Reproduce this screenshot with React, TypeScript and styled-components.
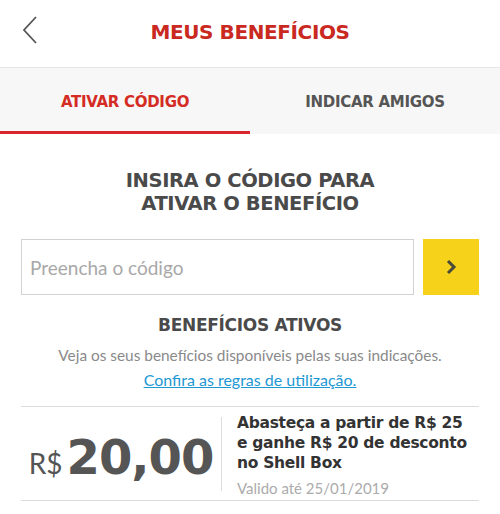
import React from 'react'
import styled, { createGlobalStyle } from 'styled-components'

const GlobalStyle = createGlobalStyle`
   html, body {
      margin: 0;
      padding: 0;
      background: #fff;
   }
   body {
      font-family: 'Lato', 'Liberation Sans', sans-serif;
   }
`

const HEAVY = `'DejaVu Sans', 'Liberation Sans', sans-serif`

const Header = styled.header`
   height: 68px;
   display: flex;
   align-items: center;
   justify-content: center;
   position: relative;
   border-bottom: 1px solid #e6e6e6;
   box-sizing: border-box;
   padding-bottom: 4px;
`

const BackButton = styled.button`
   position: absolute;
   left: 18px;
   top: 14px;
   width: 24px;
   height: 32px;
   padding: 0;
   border: 0;
   background: none;
   display: flex;
   align-items: center;
   justify-content: center;
`

const Title = styled.h1`
   margin: 0;
   font-family: ${HEAVY};
   font-weight: 700;
   font-size: 20px;
   letter-spacing: -0.4px;
   color: #c9291f;
`

const Tabs = styled.nav`
   display: flex;
   background: #f7f7f7;
   height: 66px;
`

const Tab = styled.div<{ $active?: boolean }>`
   flex: 1;
   display: flex;
   align-items: center;
   justify-content: center;
   font-family: ${HEAVY};
   font-weight: 700;
   font-size: 15px;
   letter-spacing: -0.3px;
   color: ${p => (p.$active ? '#d42c24' : '#555')};
   border-bottom: 3px solid ${p => (p.$active ? '#d7272c' : 'transparent')};
   padding-top: 4px;
`

const Content = styled.main`
   padding: 0 21px 0 21px;
   display: flex;
   flex-direction: column;
   align-items: center;
`

const Heading = styled.h2`
   margin: 35px 0 0;
   text-align: center;
   font-family: ${HEAVY};
   font-weight: 700;
   font-size: 19.5px;
   line-height: 23px;
   letter-spacing: -0.4px;
   color: #4a4a4a;
`

const CodeRow = styled.div`
   align-self: stretch;
   display: flex;
   gap: 9px;
   margin-top: 24px;
`

const CodeInput = styled.input`
   flex: 1;
   min-width: 0;
   height: 56px;
   box-sizing: border-box;
   border: 1px solid #d2d2d2;
   padding: 0 8px;
   font-family: 'Lato', sans-serif;
   font-size: 19px;
   color: #333;
   outline: none;
   &::placeholder {
      color: #a8a8a8;
   }
`

const GoButton = styled.button`
   width: 56px;
   height: 56px;
   border: 0;
   padding: 0;
   background: #f6d21b;
   display: flex;
   align-items: center;
   justify-content: center;
`

const SubHeading = styled.h3`
   margin: 20px 0 0;
   font-family: ${HEAVY};
   font-weight: 700;
   font-size: 17px;
   letter-spacing: -0.3px;
   color: #4a4a4a;
`

const Caption = styled.p`
   margin: 11px 0 0;
   font-size: 15.4px;
   color: #8a8a8a;
   text-align: center;
`

const RulesLink = styled.a`
   margin-top: 6px;
   font-size: 16px;
   color: #1d98d3;
   text-decoration: underline;
`

const BenefitCard = styled.div`
   align-self: stretch;
   margin-top: 17px;
   border-top: 1px solid #dcdcdc;
   border-bottom: 1px solid #dcdcdc;
   display: flex;
   align-items: center;
   padding: 6px 0 3px;
`

const Amount = styled.div`
   width: 200px;
   display: flex;
   align-items: baseline;
   justify-content: center;
   color: #555;
   padding-top: 4px;
`

const Currency = styled.span`
   font-size: 28px;
   font-weight: 400;
   margin-right: 4px;
`

const Value = styled.span`
   font-family: ${HEAVY};
   font-weight: 700;
   font-size: 48px;
   letter-spacing: -1px;
`

const Divider = styled.div`
   width: 1px;
   align-self: stretch;
   margin: 4px 0 6px;
   background: #ddd;
`

const Details = styled.div`
   padding-left: 15px;
   display: flex;
   flex-direction: column;
`

const Offer = styled.div`
   font-family: ${HEAVY};
   font-weight: 700;
   font-size: 15.5px;
   line-height: 20px;
   color: #333;
   letter-spacing: -0.3px;
`

const Expiry = styled.div`
   margin-top: 6px;
   font-size: 15px;
   color: #ababab;
`

const ChevronLeft = () => (
   <svg width="18" height="30" viewBox="0 0 18 30" fill="none">
      <path d="M15 2 L3 15 L15 28" stroke="#555" strokeWidth="1.8" />
   </svg>
)

const ChevronRight = () => (
   <svg width="12" height="16" viewBox="0 0 12 16" fill="none">
      <path d="M3 2 L9 8 L3 14" stroke="#4a4a3a" strokeWidth="3" />
   </svg>
)

export default function App() {
   const [code, setCode] = React.useState('')
   return (
      <>
         <GlobalStyle />
         <Header>
            <BackButton aria-label="Voltar">
               <ChevronLeft />
            </BackButton>
            <Title>MEUS BENEFÍCIOS</Title>
         </Header>
         <Tabs>
            <Tab $active>ATIVAR CÓDIGO</Tab>
            <Tab>INDICAR AMIGOS</Tab>
         </Tabs>
         <Content>
            <Heading>
               INSIRA O CÓDIGO PARA
               <br />
               ATIVAR O BENEFÍCIO
            </Heading>
            <CodeRow>
               <CodeInput
                  value={code}
                  onChange={e => setCode(e.target.value)}
                  placeholder="Preencha o código"
               />
               <GoButton aria-label="Ativar">
                  <ChevronRight />
               </GoButton>
            </CodeRow>
            <SubHeading>BENEFÍCIOS ATIVOS</SubHeading>
            <Caption>Veja os seus benefícios disponíveis pelas suas indicações.</Caption>
            <RulesLink href="#">Confira as regras de utilização.</RulesLink>
            <BenefitCard>
               <Amount>
                  <Currency>R$</Currency>
                  <Value>20,00</Value>
               </Amount>
               <Divider />
               <Details>
                  <Offer>
                     Abasteça a partir de R$ 25
                     <br />e ganhe R$ 20 de desconto
                     <br />
                     no Shell Box
                  </Offer>
                  <Expiry>Valido até 25/01/2019</Expiry>
               </Details>
            </BenefitCard>
         </Content>
      </>
   )
}
